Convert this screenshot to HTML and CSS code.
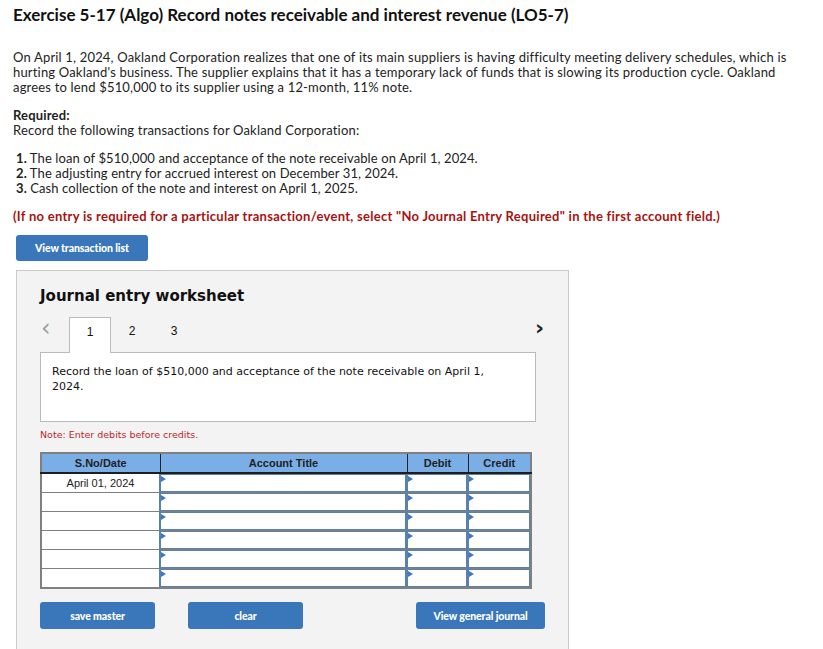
FILE: index.html
```html
<!DOCTYPE html>
<html>
<head>
<meta charset="utf-8">
<link rel="stylesheet" href="styles.css">
</head>
<body>
<h1 class="title">Exercise 5-17 (Algo) Record notes receivable and interest revenue (LO5-7)</h1>
<p class="intro">On April 1, 2024, Oakland Corporation realizes that one of its main suppliers is having difficulty meeting delivery schedules, which is hurting Oakland's business. The supplier explains that it has a temporary lack of funds that is slowing its production cycle. Oakland agrees to lend $510,000 to its supplier using a 12-month, 11% note.</p>
<p class="req"><b>Required:</b><br>Record the following transactions for Oakland Corporation:</p>
<ol class="steps">
<li><b>1.</b> The loan of $510,000 and acceptance of the note receivable on April 1, 2024.</li>
<li><b>2.</b> The adjusting entry for accrued interest on December 31, 2024.</li>
<li><b>3.</b> Cash collection of the note and interest on April 1, 2025.</li>
</ol>
<p class="warn">(If no entry is required for a particular transaction/event, select "No Journal Entry Required" in the first account field.)</p>
<button class="btn btn-list">View transaction list</button>

<div class="panel">
  <h2 class="ws-title">Journal entry worksheet</h2>
  <div class="tabs">
    <span class="arrow arrow-l">&lsaquo;</span>
    <span class="tab active">1</span>
    <span class="tab">2</span>
    <span class="tab">3</span>
    <span class="spacer"></span>
    <span class="arrow arrow-r">&rsaquo;</span>
  </div>
  <div class="desc">Record the loan of $510,000 and acceptance of the note receivable on April 1, 2024.</div>
  <p class="note">Note: Enter debits before credits.</p>
  <table class="jt">
    <colgroup><col class="c1"><col class="c2"><col class="c3"><col class="c4"></colgroup>
    <thead>
      <tr><th>S.No/Date</th><th>Account Title</th><th>Debit</th><th>Credit</th></tr>
    </thead>
    <tbody>
      <tr><td class="date">April 01, 2024</td><td class="in"><div class="f"></div></td><td class="in"><div class="f"></div></td><td class="in"><div class="f"></div></td></tr>
      <tr><td class="date"></td><td class="in"><div class="f"></div></td><td class="in"><div class="f"></div></td><td class="in"><div class="f"></div></td></tr>
      <tr><td class="date"></td><td class="in"><div class="f"></div></td><td class="in"><div class="f"></div></td><td class="in"><div class="f"></div></td></tr>
      <tr><td class="date"></td><td class="in"><div class="f"></div></td><td class="in"><div class="f"></div></td><td class="in"><div class="f"></div></td></tr>
      <tr><td class="date"></td><td class="in"><div class="f"></div></td><td class="in"><div class="f"></div></td><td class="in"><div class="f"></div></td></tr>
      <tr><td class="date"></td><td class="in"><div class="f"></div></td><td class="in"><div class="f"></div></td><td class="in"><div class="f"></div></td></tr>
    </tbody>
  </table>
  <div class="actions">
    <button class="btn btn-a">save master</button>
    <button class="btn btn-b">clear</button>
    <button class="btn btn-c">View general journal</button>
  </div>
</div>
</body>
</html>
```
FILE: styles.css
```css
html, body { margin: 0; padding: 0; background: #fff; }
body {
  padding: 0 13px;
  font-family: Lato, "Liberation Sans", sans-serif;
  color: #222;
  font-size: 13px;
  letter-spacing: 0.18px;
}
.title {
  font-size: 17px;
  font-weight: bold;
  line-height: 20px;
  margin: 5px 0 0;
  color: #111;
  letter-spacing: 0;
}
.intro {
  margin: 25px 0 0;
  line-height: 15px;
}
.req {
  margin: 13px 0 0;
  line-height: 15px;
}
.steps {
  list-style: none;
  margin: 13px 0 0;
  padding: 0 0 0 3px;
  line-height: 15px;
  letter-spacing: 0.1px;
}
.warn {
  margin: 13px 0 0;
  line-height: 15px;
  color: #a8120f;
  font-weight: bold;
  font-size: 13px;
  letter-spacing: 0.28px;
}
.btn {
  display: block;
  background: #3a76ba;
  color: #fff;
  border: none;
  border-radius: 3px;
  font-family: Lato, "Liberation Sans", sans-serif;
  font-weight: 900;
  font-size: 10.5px;
  letter-spacing: -0.1px;
  height: 27px;
  padding: 0;
  cursor: pointer;
}
.btn-list {
  margin: 11px 0 0 3px;
  width: 132px;
  height: 26px;
}
.panel {
  margin: 9px 0 0 3px;
  width: 528px;
  padding: 16px 0 20px 23px;
  background: #f3f3f3;
  border: 1px solid #cacaca;
  font-family: "DejaVu Sans", Verdana, sans-serif;
  letter-spacing: 0;
}
.ws-title {
  margin: 0;
  font-size: 15px;
  line-height: 19px;
  font-weight: bold;
  color: #111;
}
.tabs {
  display: flex;
  align-items: stretch;
  height: 35px;
  margin-top: 11px;
  width: 503px;
}
.arrow {
  font-size: 24px;
  line-height: 22px;
  width: 29px;
  color: #a0a0a0;
  padding-left: 1px;
  box-sizing: border-box;
}
.arrow-r {
  color: #222;
  width: 8px;
  padding: 0;
  font-weight: bold;
  font-size: 22px;
}
.spacer { flex: 1; }
.tab {
  width: 42px;
  text-align: center;
  font-family: "Liberation Sans", Arial, sans-serif;
  font-size: 12px;
  line-height: 26px;
  color: #111;
  box-sizing: border-box;
  padding-top: 1px;
}
.tab.active {
  border: 1px solid #bbb;
  border-bottom: none;
  background: #fff;
  position: relative;
  z-index: 1;
  height: 36px;
}
.desc {
  width: 496px;
  height: 70px;
  box-sizing: border-box;
  background: #fff;
  border: 1px solid #bbb;
  padding: 11px 50px 0 11px;
  font-size: 11px;
  line-height: 15px;
  color: #111;
}
.note {
  margin: 6px 0 0;
  font-size: 9.5px;
  line-height: 14px;
  color: #c0262b;
}
.jt {
  margin-top: 10px;
  border-collapse: collapse;
  table-layout: fixed;
  width: 491px;
  font-family: "Liberation Sans", Arial, sans-serif;
  font-size: 11px;
}
.c1 { width: 119px; }
.c2 { width: 247px; }
.c3 { width: 61px; }
.c4 { width: 63px; }
.jt th {
  background: #7aaee6;
  color: #222;
  font-weight: bold;
  height: 18px;
  padding: 0;
  border-top: 2px solid #808080;
  border-bottom: 2px solid #1e1e1e;
  border-left: 1px solid #222;
  border-right: 1px solid #222;
}
.jt th:first-child { border-left: 2px solid #808080; }
.jt th:last-child { border-right: 2px solid #808080; }
.jt td {
  height: 18px;
  padding: 0;
  border: 1px solid #808080;
  background: #fff;
}
.jt td.date {
  text-align: center;
  color: #222;
  border-left: 2px solid #808080;
}
.jt td.in {
  border: 1px solid #808080;
  border-left: 2px solid #5a80ad;
}
.jt td.in:last-child { border-right: 2px solid #808080; }
.jt tbody tr:last-child td { border-bottom: 2px solid #808080; }
.f {
  height: 16px;
  border: 1px solid #5a80ad;
  border-left: none;
  position: relative;
}
.f::before {
  content: "";
  position: absolute;
  left: 0;
  top: 1px;
  border-left: 5px solid #3d78c4;
  border-top: 3px solid transparent;
  border-bottom: 3px solid transparent;
}
.actions {
  display: flex;
  margin-top: 13px;
}
.btn-a { width: 115px; }
.btn-b { width: 115px; margin-left: 33px; }
.btn-c { width: 129px; margin-left: 113px; }
```
